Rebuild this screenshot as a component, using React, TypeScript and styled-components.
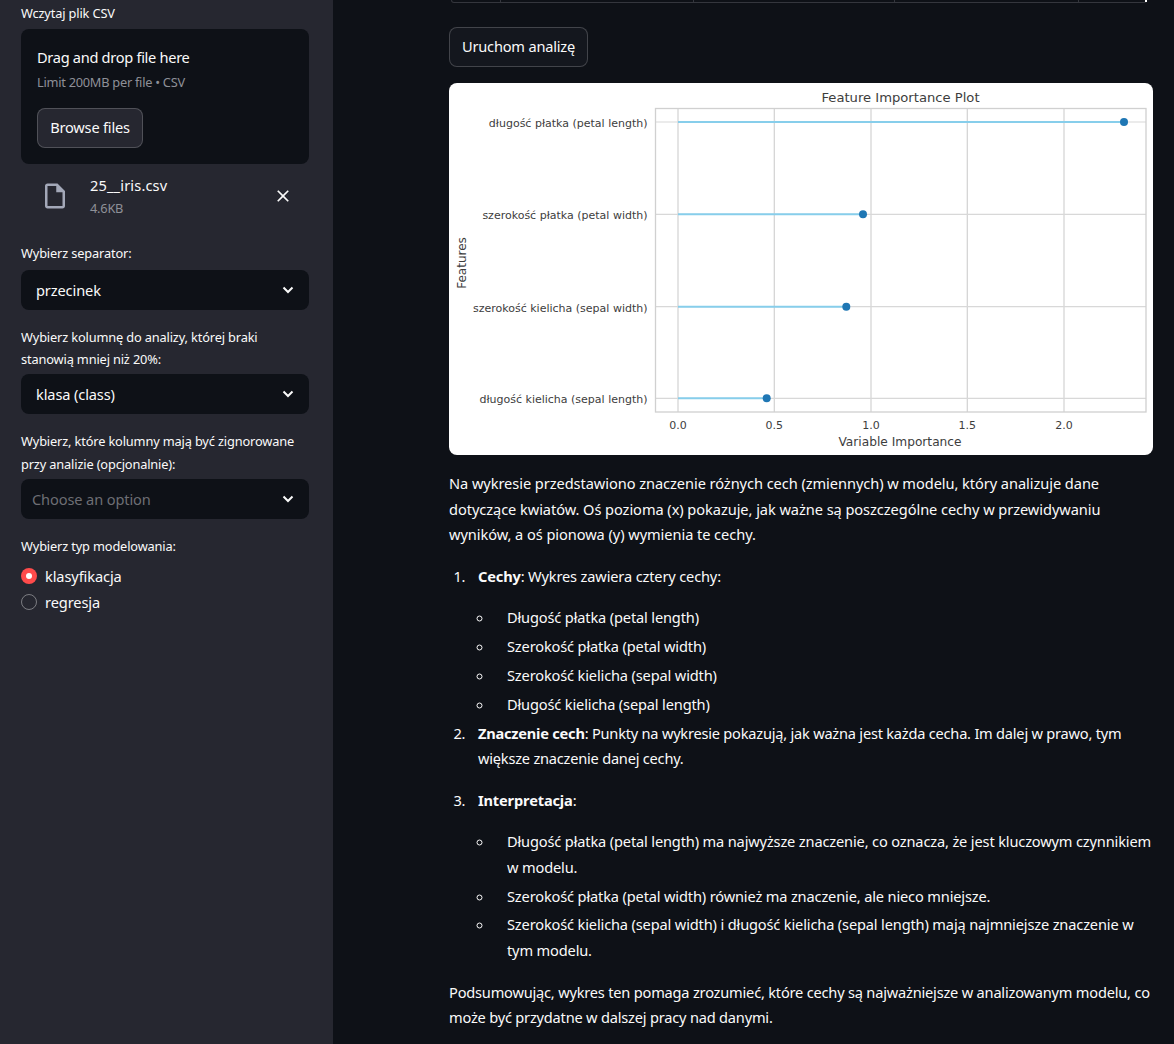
import React from "react";
import styled, { createGlobalStyle } from "styled-components";
import { MdOutlineInsertDriveFile, MdClose } from "react-icons/md";

const Global = createGlobalStyle`
  html, body { margin: 0; padding: 0; background: #0e1117; }
  * { box-sizing: border-box; }
  body { font-family: "Noto Sans", "Lato", sans-serif; color: #fafafa; }
`;

const Page = styled.div`
  display: grid;
  grid-template-columns: 333px 1fr;
  width: 1174px;
  height: 1044px;
  overflow: hidden;
`;

const Sidebar = styled.aside`
  background: #262730;
  padding: 2px 24px 0 21px;
  display: flex;
  flex-direction: column;
`;

const FieldLabel = styled.div<{ $top?: number; $bottom?: number }>`
  font-size: 12.8px;
  line-height: 22.4px;
  letter-spacing: -0.15px;
  margin-top: ${(p) => p.$top ?? 0}px;
  margin-bottom: ${(p) => p.$bottom ?? 4}px;
`;

const Dropzone = styled.div`
  background: #0e1117;
  border-radius: 8px;
  height: 135px;
  padding: 16px;
`;

const DropTitle = styled.div`
  font-size: 14.6px;
  letter-spacing: -0.3px;
  line-height: 25px;
`;

const DropHint = styled.div`
  font-size: 12.8px;
  letter-spacing: -0.26px;
  line-height: 25px;
  color: #8e9097;
  margin-bottom: 13px;
`;

const BaseButton = styled.button`
  font: inherit;
  font-size: 14.6px;
  letter-spacing: -0.2px;
  color: #fafafa;
  height: 40px;
  border-radius: 8px;
  padding: 0 12px;
  border: 1px solid rgba(250, 250, 250, 0.2);
`;

const BrowseButton = styled(BaseButton)`
  background: #262730;
  width: 106px;
  padding: 0 0 2px;
`;

const FileRow = styled.div`
  display: flex;
  align-items: center;
  height: 64px;
  margin-bottom: 14px;
  padding-left: 19px;
`;

const FileGlyph = styled(MdOutlineInsertDriveFile)`
  width: 30px;
  height: 30px;
  color: #a3a8b8;
  flex: none;
`;

const FileInfo = styled.div`
  margin-left: 20px;
  flex: 1;
`;

const FileName = styled.div`
  font-size: 14.6px;
  letter-spacing: 0.15px;
  line-height: 22px;
`;

const FileSize = styled.div`
  font-size: 12.8px;
  letter-spacing: -0.22px;
  line-height: 22px;
  margin-top: 1px;
  color: #8e9097;
`;

const CloseGlyph = styled(MdClose)`
  width: 20px;
  height: 20px;
  color: #fafafa;
  margin-right: 16px;
`;

const Select = styled.div<{ $inset?: number; $muted?: boolean }>`
  height: 40px;
  background: #0e1117;
  border-radius: 8px;
  display: flex;
  align-items: center;
  justify-content: space-between;
  padding: 0 15px 0 ${(p) => p.$inset ?? 15}px;
  font-size: 14.6px;
  letter-spacing: -0.12px;
  color: ${(p) => (p.$muted ? "#6d6e74" : "#fafafa")};
`;

const Radio = styled.div`
  display: flex;
  align-items: center;
  gap: 8px;
  height: 26px;
  font-size: 14.6px;
  letter-spacing: -0.1px;
`;

const RadioDot = styled.span<{ $on?: boolean }>`
  width: 16px;
  height: 16px;
  border-radius: 50%;
  flex: none;
  background: ${(p) => (p.$on ? "#ff4b4b" : "transparent")};
  border: ${(p) => (p.$on ? "none" : "1px solid rgba(250,250,250,0.4)")};
  display: flex;
  align-items: center;
  justify-content: center;
  &::after {
    content: "";
    display: ${(p) => (p.$on ? "block" : "none")};
    width: 6px;
    height: 6px;
    border-radius: 50%;
    background: #fff;
  }
`;

const Main = styled.main`
  padding: 0 21px 0 116px;
  font-size: 14.6px;
  letter-spacing: -0.15px;
  line-height: 25.6px;
`;

const TableEdge = styled.div`
  position: relative;
  display: grid;
  grid-template-columns: 49px 193px 201px 184px 1fr;
  height: 3px;
  width: 696px;
  border-bottom: 1px solid #34363d;
  border-left: 1px solid #34363d;
  border-right: 1px solid #34363d;
  border-radius: 0 0 6px 6px;
  margin-left: 2px;
  &::after {
    content: "";
    position: absolute;
    right: -1px;
    top: 0;
    width: 2px;
    height: 2px;
    background: #fff;
  }
`;

const TableCell = styled.div`
  border-right: 1px solid #34363d;
  &:last-child { border-right: none; }
`;

const RunButton = styled(BaseButton)`
  display: block;
  background: #14171e;
  margin: 24px 0 16px;
  width: 139px;
  padding: 0;
`;

const PlotCard = styled.div`
  background: #fff;
  border-radius: 8px;
  overflow: hidden;
  height: 372px;
  margin-bottom: 16px;
`;

const PlotSvg = styled.svg`
  display: block;
  font-family: "DejaVu Sans", sans-serif;
  fill: #3d3d3d;
  letter-spacing: 0;
`;

const Para = styled.p<{ $tracking?: number }>`
  margin: 0 0 16px;
  ${(p) => (p.$tracking !== undefined ? `letter-spacing: ${p.$tracking}px;` : "")}
`;

const Ordered = styled.ol`
  margin: 0 0 16px;
  padding-left: 20px;
`;

const Bullets = styled.ul`
  margin: 0;
  padding-left: 16px;
  list-style: circle;
`;

const NumberItem = styled.li`
  margin-top: 3.2px;
  padding-left: 9px;
`;

const BulletItem = styled.li`
  margin-top: 3.2px;
  padding-left: 13px;
`;

const Chevron = () => (
  <svg width="12" height="8" viewBox="0 0 12 8" fill="none">
    <path d="M1.5 1.5 6 6l4.5-4.5" stroke="#fafafa" strokeWidth="2" />
  </svg>
);

const features = [
  { label: "długość płatka (petal length)", y: 39, x: 675 },
  { label: "szerokość płatka (petal width)", y: 131.3, x: 414 },
  { label: "szerokość kielicha (sepal width)", y: 223.7, x: 397.3 },
  { label: "długość kielicha (sepal length)", y: 315.3, x: 317.7 },
];

const ticks = [
  { t: "0.0", x: 229 },
  { t: "0.5", x: 325.3 },
  { t: "1.0", x: 422 },
  { t: "1.5", x: 518.3 },
  { t: "2.0", x: 615 },
];

const Plot = () => (
  <PlotSvg width="704" height="372" viewBox="0 0 704 372">
    {ticks.map((k) => (
      <line key={k.t} x1={k.x} x2={k.x} y1={25.5} y2={329} stroke="#d2d2d2" strokeWidth="1.2" />
    ))}
    {features.map((f) => (
      <line key={f.label} x1={206.5} x2={697} y1={f.y} y2={f.y} stroke="#d8d8d8" strokeWidth="1.2" />
    ))}
    <rect x={206.5} y={25.5} width={490.5} height={303.5} fill="none" stroke="#d0d0d0" strokeWidth="1.3" />
    {features.map((f) => (
      <g key={f.x}>
        <line x1={229} x2={f.x} y1={f.y} y2={f.y} stroke="#87ceeb" strokeWidth="2" />
        <circle cx={f.x} cy={f.y} r={4} fill="#1f77b4" />
        <text x={198.5} y={f.y + 5} textAnchor="end" fontSize="11">{f.label}</text>
      </g>
    ))}
    {ticks.map((k) => (
      <text key={k.t} x={k.x} y={346} textAnchor="middle" fontSize="11">{k.t}</text>
    ))}
    <text x={451.5} y={18.5} textAnchor="middle" fontSize="13.15">Feature Importance Plot</text>
    <text x={451} y={362.5} textAnchor="middle" fontSize="12.2">Variable Importance</text>
    <text transform="translate(17 180) rotate(-90)" textAnchor="middle" fontSize="12">Features</text>
  </PlotSvg>
);

export default function App() {
  return (
    <Page>
      <Global />
      <Sidebar>
        <FieldLabel $bottom={5}>Wczytaj plik CSV</FieldLabel>
        <Dropzone>
          <DropTitle>Drag and drop file here</DropTitle>
          <DropHint>Limit 200MB per file • CSV</DropHint>
          <BrowseButton>Browse files</BrowseButton>
        </Dropzone>
        <FileRow>
          <FileGlyph />
          <FileInfo>
            <FileName>25__iris.csv</FileName>
            <FileSize>4.6KB</FileSize>
          </FileInfo>
          <CloseGlyph />
        </FileRow>
        <FieldLabel $bottom={5.2}>Wybierz separator:</FieldLabel>
        <Select>przecinek<Chevron /></Select>
        <FieldLabel $top={16} $bottom={3.6}>Wybierz kolumnę do analizy, której braki stanowią mniej niż 20%:</FieldLabel>
        <Select>klasa (class)<Chevron /></Select>
        <FieldLabel $top={16}>Wybierz, które kolumny mają być zignorowane przy analizie (opcjonalnie):</FieldLabel>
        <Select $inset={11} $muted>Choose an option<Chevron /></Select>
        <FieldLabel $top={16} $bottom={5.8}>Wybierz typ modelowania:</FieldLabel>
        <Radio><RadioDot $on />klasyfikacja</Radio>
        <Radio><RadioDot />regresja</Radio>
      </Sidebar>
      <Main>
        <TableEdge>
          <TableCell /><TableCell /><TableCell /><TableCell /><TableCell />
        </TableEdge>
        <RunButton>Uruchom analizę</RunButton>
        <PlotCard><Plot /></PlotCard>
        <Para $tracking={-0.06}>
          Na wykresie przedstawiono znaczenie różnych cech (zmiennych) w modelu, który analizuje dane dotyczące kwiatów. Oś pozioma (x) pokazuje, jak ważne są poszczególne cechy w przewidywaniu wyników, a oś pionowa (y) wymienia te cechy.
        </Para>
        <Ordered>
          <NumberItem>
            <Para><strong>Cechy</strong>: Wykres zawiera cztery cechy:</Para>
            <Bullets>
              <BulletItem>Długość płatka (petal length)</BulletItem>
              <BulletItem>Szerokość płatka (petal width)</BulletItem>
              <BulletItem>Szerokość kielicha (sepal width)</BulletItem>
              <BulletItem>Długość kielicha (sepal length)</BulletItem>
            </Bullets>
          </NumberItem>
          <NumberItem>
            <Para $tracking={-0.22}><strong>Znaczenie cech</strong>: Punkty na wykresie pokazują, jak ważna jest każda cecha. Im dalej w prawo, tym większe znaczenie danej cechy.</Para>
          </NumberItem>
          <NumberItem>
            <Para><strong>Interpretacja</strong>:</Para>
            <Bullets>
              <BulletItem>Długość płatka (petal length) ma najwyższe znaczenie, co oznacza, że jest kluczowym czynnikiem w modelu.</BulletItem>
              <BulletItem>Szerokość płatka (petal width) również ma znaczenie, ale nieco mniejsze.</BulletItem>
              <BulletItem>Szerokość kielicha (sepal width) i długość kielicha (sepal length) mają najmniejsze znaczenie w tym modelu.</BulletItem>
            </Bullets>
          </NumberItem>
        </Ordered>
        <Para $tracking={-0.2}>
          Podsumowując, wykres ten pomaga zrozumieć, które cechy są najważniejsze w analizowanym modelu, co może być przydatne w dalszej pracy nad danymi.
        </Para>
      </Main>
    </Page>
  );
}
